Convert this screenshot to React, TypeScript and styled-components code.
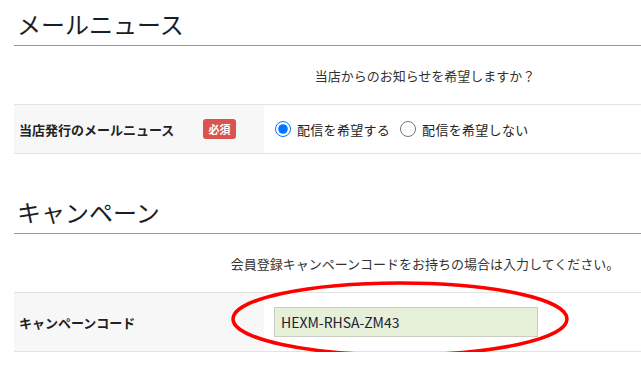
import React from "react";
import styled, { createGlobalStyle } from "styled-components";

const Global = createGlobalStyle`
  html, body { margin: 0; padding: 0; background: #fff; overflow: hidden; }
  body { font-family: "Noto Sans CJK JP", "Noto Sans", sans-serif; color: #222; }
`;

const Page = styled.div`
  width: 822px;
  padding-left: 14px;
  position: relative;
`;

const Heading = styled.h2<{ $first?: boolean }>`
  margin: ${(p) => (p.$first ? "0" : "34px")} 0 0;
  padding: 9px 0 0 3px;
  height: 36px;
  font-size: 24px;
  font-weight: 400;
  line-height: 30px;
  color: #1b1e24;
  border-bottom: 1px solid #999;
`;

const Info = styled.div`
  height: 58px;
  display: flex;
  align-items: center;
  justify-content: center;
  font-size: 13px;
  color: #333;
  border-bottom: 1px solid #e2e2e2;
`;

const Row = styled.div<{ $h: number }>`
  display: flex;
  height: ${(p) => p.$h}px;
  border-bottom: 1px solid #e2e2e2;
`;

const LabelCell = styled.div`
  width: 250px;
  flex: none;
  background: #f7f7f7;
  display: flex;
  align-items: center;
  justify-content: space-between;
  padding: 0 28px 0 5px;
  box-sizing: border-box;
  font-size: 13px;
  font-weight: 700;
  color: #222;
`;

const Badge = styled.span`
  display: inline-flex;
  align-items: center;
  justify-content: center;
  width: 33px;
  height: 20px;
  border-radius: 3px;
  background: #d9534f;
  color: #fff;
  font-size: 11px;
  font-weight: 700;
`;

const ValueCell = styled.div`
  flex: 1;
  display: flex;
  align-items: center;
  padding-left: 10px;
  font-size: 13px;
  color: #222;
`;

const RadioLabel = styled.label`
  display: inline-flex;
  align-items: center;
  margin-right: 9px;
  letter-spacing: 0.3px;
  input {
    width: 16px;
    height: 16px;
    margin: 0 6px 0 1px;
  }
`;

const CodeInput = styled.input`
  width: 264px;
  height: 30px;
  box-sizing: border-box;
  border: 1px solid #c9cdc2;
  background: #e6efd8;
  padding: 0 6px;
  font-family: "Noto Sans CJK JP", "Noto Sans", sans-serif;
  font-size: 14px;
  color: #1b2230;
  outline: none;
`;

const Mark = styled.svg`
  position: absolute;
  left: 230px;
  top: 280px;
  pointer-events: none;
`;

export default function App() {
  return (
    <>
      <Global />
      <Page>
        <Heading $first>メールニュース</Heading>
        <Info>当店からのお知らせを希望しますか？</Info>
        <Row $h={48}>
          <LabelCell>
            <span>当店発行のメールニュース</span>
            <Badge>必須</Badge>
          </LabelCell>
          <ValueCell>
            <RadioLabel>
              <input type="radio" name="mail" defaultChecked />
              配信を希望する
            </RadioLabel>
            <RadioLabel>
              <input type="radio" name="mail" />
              配信を希望しない
            </RadioLabel>
          </ValueCell>
        </Row>
        <Heading>キャンペーン</Heading>
        <Info>会員登録キャンペーンコードをお持ちの場合は入力してください。</Info>
        <Row $h={58}>
          <LabelCell>
            <span>キャンペーンコード</span>
          </LabelCell>
          <ValueCell>
            <CodeInput defaultValue="HEXM-RHSA-ZM43" />
          </ValueCell>
        </Row>
        <Mark width="342" height="78" viewBox="0 0 342 78">
          <ellipse cx="170" cy="39" rx="167" ry="36" fill="none" stroke="#f00" strokeWidth="3.5" />
        </Mark>
      </Page>
    </>
  );
}
